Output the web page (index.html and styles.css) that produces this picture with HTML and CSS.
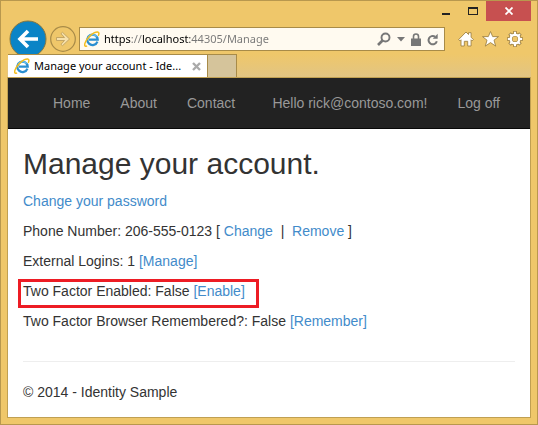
FILE: index.html
```html
<!DOCTYPE html>
<html lang="en">
<head>
<meta charset="utf-8">
<title>Manage your account - Identity Sample</title>
<link rel="stylesheet" href="styles.css">
</head>
<body>
<svg width="0" height="0" class="defs" aria-hidden="true">
  <symbol id="ie" viewBox="0 0 16 16">
    <path d="M13.4 10.6A5.2 5.2 0 1 1 13.700 8.600H5" fill="none" stroke="#2b8fd0" stroke-width="2.300"/>
    <path d="M4.100 6.200A5 5 0 0 1 12.500 5.600" fill="none" stroke="#6cc4ee" stroke-width="1.200"/>
    <path d="M3.100 14.900C1.200 15.900.2 14.800.9 12.400 1.900 9 6.200 3.800 10.400 1.700c2.600-1.300 4.600-1 4.500.8 0 .8-.3 1.600-.7 2.400" fill="none" stroke="#f3bd1d" stroke-width="1.500"/>
  </symbol>
</svg>
<div class="window">
  <header class="titlebar">
    <button class="caption" aria-label="Minimize"><svg width="8" height="12"><path d="M0 10h8v2H0z" fill="#222"/></svg></button>
    <button class="caption" aria-label="Maximize"><svg width="10" height="12"><path d="M0 4h10v8H0zM1 6v5h8V6z" fill="#222" fill-rule="evenodd"/></svg></button>
    <button class="close" aria-label="Close"><svg width="8" height="8"><path d="M.5.5l7 7M7.5.5l-7 7" stroke="#fff" stroke-width="1.8"/></svg></button>
  </header>
  <div class="toolbar">
    <button class="tool" aria-label="Back"><svg width="38" height="38"><circle cx="19" cy="19" r="18" fill="#0a84c6" stroke="#87773f"/><path d="M29 19H11M19 11l-8 8 8 8" fill="none" stroke="#fff" stroke-width="3.6"/></svg></button>
    <button class="tool" aria-label="Forward"><svg width="26" height="26"><circle cx="13" cy="13" r="12.3" fill="none" stroke="#a88b48" stroke-width="1.2"/><path d="M6.500 11.500h8l-3.500-3.800 1.500-1.400 7 6.700-7 6.700-1.500-1.400 3.500-3.800h-8z" fill="#f7e1ab" stroke="#b79b5c" stroke-width=".8"/></svg></button>
    <div class="address">
      <svg width="16" height="16"><use href="#ie"/></svg>
      <input class="url" type="text" aria-label="Address" value="https://localhost:44305/Manage">
      <button class="tool" aria-label="Search"><svg width="14" height="14"><circle cx="8.500" cy="5.500" r="4" fill="none" stroke="#777" stroke-width="1.900"/><path d="M5.500 8.500L1 13" stroke="#777" stroke-width="2.600"/></svg></button>
      <button class="tool" aria-label="Show address bar menu"><svg width="8" height="5"><path d="M0 0h8L4 4.500z" fill="#777"/></svg></button>
      <button class="tool" aria-label="Security report"><svg width="10" height="13"><path d="M2.500 6V3.500a2.500 2.500 0 0 1 5 0V6" fill="none" stroke="#777" stroke-width="1.600"/><path d="M0 5.500h10V13H0z" fill="#777"/></svg></button>
      <button class="tool" aria-label="Refresh"><svg width="12" height="13"><path d="M9.800 8.300A4.200 4.200 0 1 1 8 3.600" fill="none" stroke="#777" stroke-width="2"/><path d="M5.800 5.800h4.900V.8z" fill="#777"/></svg></button>
    </div>
    <div class="commands">
      <button class="tool" aria-label="Home"><svg width="16" height="16"><path d="M.6 8.600L8 1l2.500 2.500V1.700h2.600v4.500l2.300 2.400-1.300 1.200-1-1V15H9.700v-4.700H6.300V15H3V8.800l-1 1z" fill="#fff" stroke="#a08344" stroke-width=".9"/></svg></button>
      <button class="tool" aria-label="Favorites"><svg width="17" height="16"><path d="M8.500.5l2.200 5.100h5.800l-4.500 3.600 1.700 5.900-5.200-3.500-5.200 3.500L5 9.200.5 5.600h5.800z" fill="#fff" stroke="#a08344" stroke-width=".9"/></svg></button>
      <button class="tool" aria-label="Tools"><svg width="16" height="16"><g fill="none"><path d="M8 0v16M0 8h16M2.500 2.500l11 11M13.500 2.500l-11 11" stroke="#a08344" stroke-width="3.600"/><circle cx="8" cy="8" r="4.300" stroke="#a08344" stroke-width="4"/><path d="M8 .8v3M8 12.200v3M.8 8h3M12.200 8h3M3.100 3.100l2 2M10.900 10.900l2 2M12.900 3.100l-2 2M5.100 10.900l-2 2" stroke="#fff" stroke-width="2"/><circle cx="8" cy="8" r="4.300" stroke="#fff" stroke-width="2.400"/></g><circle cx="8" cy="8" r="2.500" fill="#efc76a"/></svg></button>
    </div>
  </div>
  <div class="tabs">
    <div class="tab">
      <svg width="16" height="16"><use href="#ie"/></svg>
      <span class="tab-title">Manage your account - Ide...</span>
      <button class="tool" aria-label="Close tab"><svg width="9" height="9"><path d="M1 1l7 7M8 1L1 8" stroke="#aaa" stroke-width="2.400"/></svg></button>
    </div>
    <button class="new-tab" aria-label="New tab"></button>
  </div>
  <div class="page">
    <nav class="navbar">
      <ul class="nav">
        <li><a href="#">Home</a></li>
        <li><a href="#">About</a></li>
        <li><a href="#">Contact</a></li>
      </ul>
      <ul class="nav">
        <li><a href="#">Hello rick@contoso.com!</a></li>
        <li><a href="#">Log off</a></li>
      </ul>
    </nav>
    <main class="content">
      <h2>Manage your account.</h2>
      <p><a href="#">Change your password</a></p>
      <p>Phone Number: 206-555-0123 [ <a href="#">Change</a> &nbsp;|&nbsp; <a href="#">Remove</a> ]</p>
      <p>External Logins: 1 <a href="#">[Manage]</a></p>
      <p><span class="marked">Two Factor Enabled: False <a href="#">[Enable]</a></span></p>
      <p>Two Factor Browser Remembered?: False <a href="#">[Remember]</a></p>
      <hr>
      <footer>© 2014 - Identity Sample</footer>
    </main>
  </div>
</div>
</body>
</html>
```
FILE: styles.css
```css
* { box-sizing: border-box; }
body {
  margin: 0;
  font: 14px/20px "Liberation Sans", Arial, sans-serif;
  color: #333;
}
button { border: 0; padding: 0; background: none; }
svg { display: block; flex: none; }
.defs { position: absolute; }

.window {
  display: flex;
  flex-direction: column;
  min-height: 100vh;
  padding: 0 6px 6px;
  border: 1px solid #b8984e;
  background: #efc76a;
}
.titlebar {
  display: flex;
  justify-content: flex-end;
  align-items: flex-start;
  height: 20px;
}
.caption {
  display: flex;
  justify-content: center;
  width: 27px;
  padding-top: 2px;
}
.close {
  display: flex;
  align-items: center;
  justify-content: center;
  width: 45px;
  height: 20px;
  background: #c75050;
}

.toolbar {
  display: flex;
  align-items: center;
  gap: 3px;
  height: 33px;
  padding: 3px 8px 0 2px;
}
.address {
  flex: 1;
  display: flex;
  align-items: center;
  min-width: 0;
  height: 24px;
  padding: 0 5px 0 4px;
  border: 1px solid #a88b48;
  background: #fffaf0;
}
.url {
  flex: 1;
  min-width: 0;
  margin-left: 4px;
  padding: 0;
  border: 0;
  outline: 0;
  font: 11px/20px "Noto Sans", "Open Sans", sans-serif;
  color: transparent;
  background: linear-gradient(90deg, #000 27px, #777 27px 38px, #000 38px 86px, #777 86px);
  -webkit-background-clip: text;
  background-clip: text;
}
.address .tool { margin-left: 6px; }
.commands {
  display: flex;
  gap: 8px;
  margin-left: 10px;
}

.tabs {
  position: relative;
  display: flex;
  height: 23px;
  padding-left: 1px;
  background: linear-gradient(#efc76a, #e2c583);
}
.tab {
  display: flex;
  align-items: center;
  width: 200px;
  padding: 0 6px;
  border: 1px solid #a88b48;
  border-width: 1px 1px 0 0;
  background: #fff;
}
.tab-title {
  flex: 1;
  margin-left: 4px;
  font: 11px/20px "Noto Sans", "Open Sans", sans-serif;
  color: #000;
  white-space: nowrap;
}
.new-tab {
  width: 29px;
  border: 1px solid #a88b48;
  border-width: 1px 1px 0 0;
  background: #d5c49b;
}

.page {
  flex: 1;
  border: 1px solid #c0a052;
  background: #fff;
}
.navbar {
  display: flex;
  justify-content: space-between;
  padding: 0 15px 0 30px;
  border-bottom: 1px solid #080808;
  background: #222;
}
.nav {
  display: flex;
  margin: 0;
  padding: 0;
  list-style: none;
}
.nav a {
  display: block;
  padding: 15px;
  color: #999;
}
.content { padding: 18px 15px 15px; }
h2 {
  margin: 0 0 11px;
  font-size: 30px;
  line-height: 33px;
  font-weight: 400;
}
p { margin: 0 0 10px; }
a { color: #428bca; text-decoration: none; }
.marked { position: relative; }
.marked::after {
  content: "";
  position: absolute;
  inset: -4px -14px -9px -5px;
  border: 3px solid #ed1c24;
  pointer-events: none;
}
hr {
  margin: 30px 0 20px;
  border: 0;
  border-top: 1px solid #eee;
}
```
